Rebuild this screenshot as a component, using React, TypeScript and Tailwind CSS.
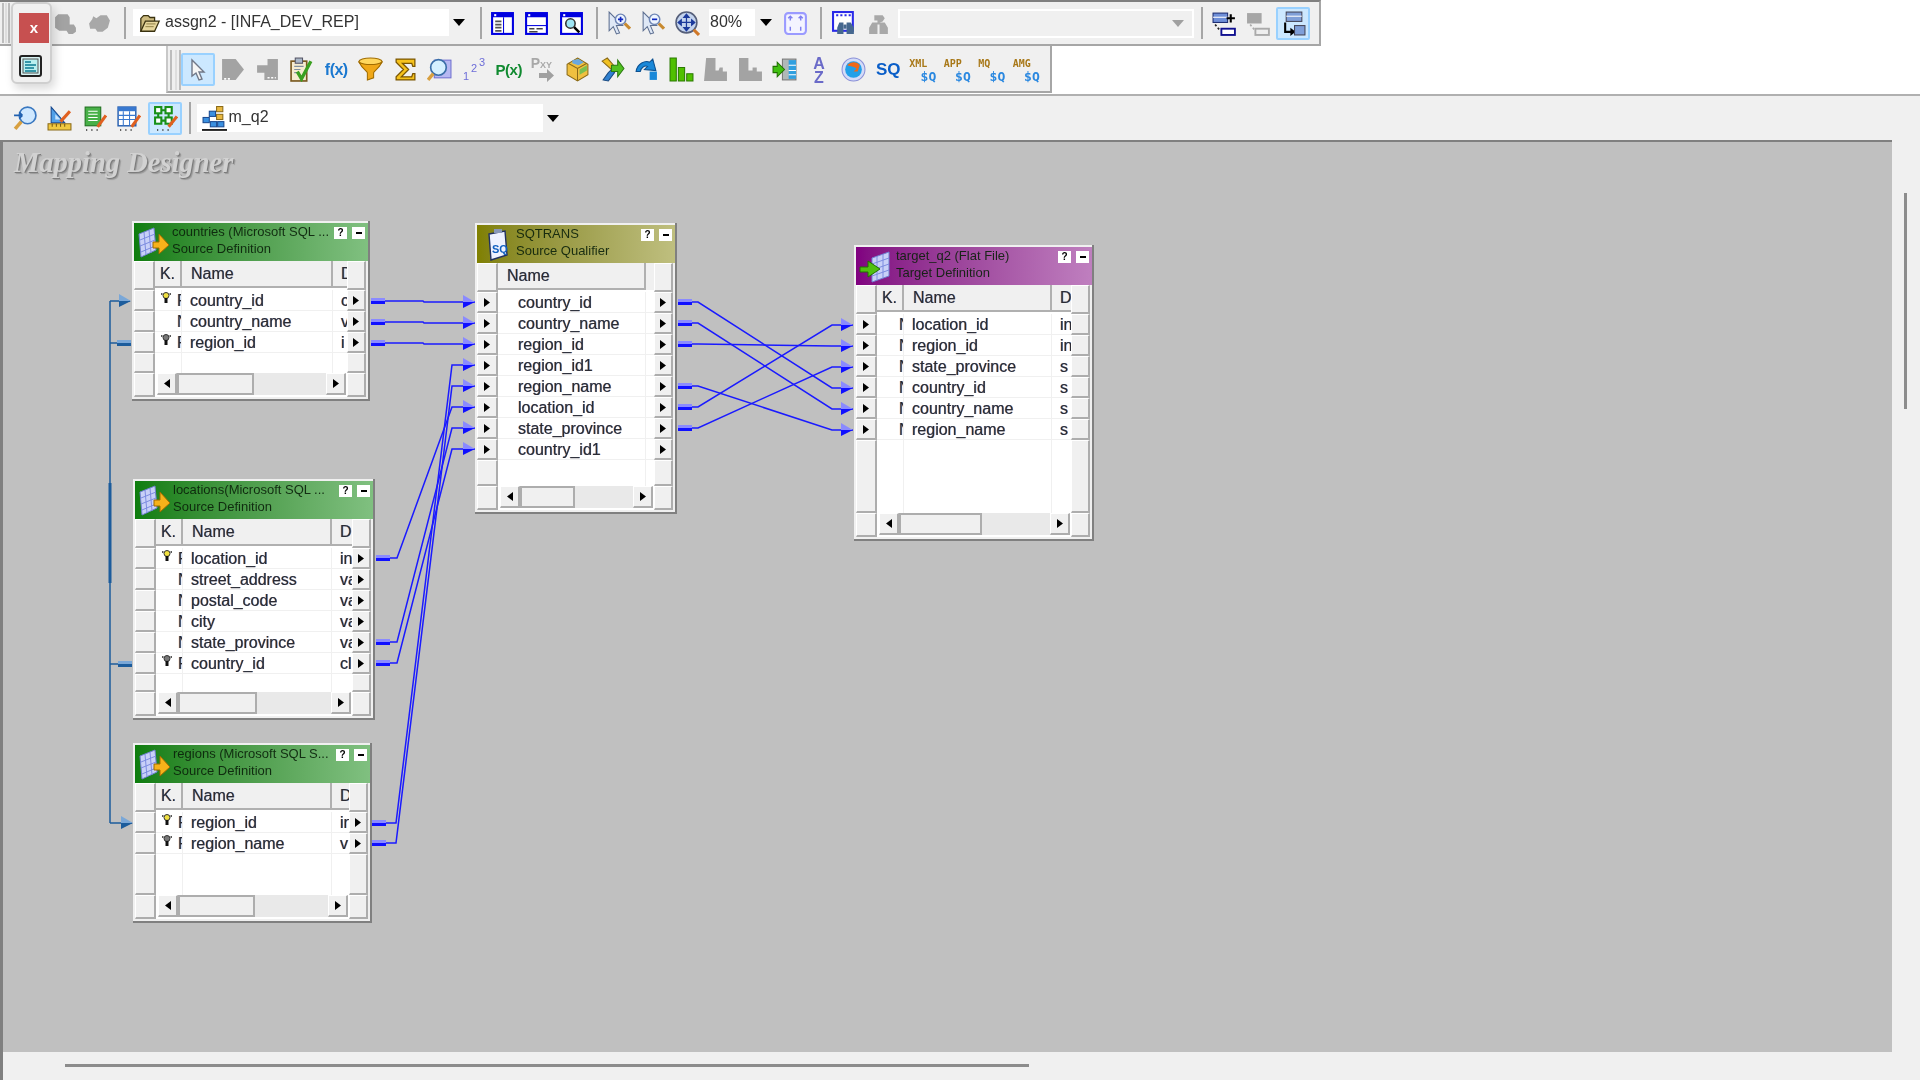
import React from "react";

const Ic = ({ children, s = 25 }: { children: React.ReactNode; s?: number }) => (
  <svg viewBox="0 0 24 24" width={s} height={s} className="block shrink-0">{children}</svg>
);
const Btn = ({ children, active }: { children?: React.ReactNode; active?: boolean }) => (
  <div className="w-[34.5px] h-full shrink-0 flex items-center justify-center">
    {active ? (
      <div className="w-[34px] h-[33px] flex items-center justify-center bg-[#cce8ff] border-2 border-[#99d1ff] rounded-[2px]">{children}</div>
    ) : children}
  </div>
);
const Sep = ({ cls }: { cls: string }) => <div className={`w-[2px] h-[32px] bg-[#a6a6a6] shrink-0 ${cls}`} />;
const Caret = ({ gray }: { gray?: boolean }) => (
  <svg width="12" height="7" viewBox="0 0 12 7"><path d="M0 0h12L6 7z" fill={gray ? "#a0a0a0" : "#000"} /></svg>
);
const Grip = ({ cls }: { cls: string }) => (
  <div className={`h-[40px] border-x-2 border-[#bdbdbd] shrink-0 ${cls}`}><div className="w-[2px] mx-auto h-full bg-[#dedede]" /></div>
);

const Blob1 = () => <Ic><path d="M2 6l3-3h9l2 3v7h4l2 3v4l-3 2h-4l-2-3H6l-4-3z" fill="#a3a3a3" /></Ic>;
const Blob2 = () => <Ic><path d="M6 5l3 2 4-3h6l3 5-2 7-5 4h-5l-2-3H3l-1-5 3-4z" fill="#a8a8a8" /></Ic>;
const Folder = () => <Ic s={22}><path d="M2 21V7l3-3h5l2 2h5v4" fill="#cdbb80" stroke="#3a3210" strokeWidth="1.4" /><path d="M2 21l5-11h15l-5 11z" fill="#e6d69c" stroke="#3a3210" strokeWidth="1.4" /><path d="M8 13h10M7 16h9" stroke="#8a7a40" /></Ic>;
const WinBase = ({ children }: { children?: React.ReactNode }) => (<><rect x="2" y="2" width="20" height="20" fill="#fff" stroke="#0000e0" strokeWidth="2" /><rect x="2" y="2" width="20" height="4" fill="#0000e0" /><rect x="4" y="3" width="2" height="2" fill="#fff" />{children}</>);
const Win1 = () => <Ic><WinBase><path d="M13 6v16" stroke="#0000e0" /><path d="M5 10h6M5 13h6M5 16h6M5 19h6" stroke="#555" strokeWidth="1.6" /></WinBase></Ic>;
const Win2 = () => <Ic><WinBase><path d="M2 14h20" stroke="#0000e0" /><path d="M5 17h5M12 17h6M5 20h8" stroke="#444" strokeWidth="1.5" /></WinBase></Ic>;
const Win3 = () => <Ic><WinBase><circle cx="11" cy="12" r="4.5" fill="#9fe6f5" stroke="#333" strokeWidth="1.5" /><path d="M14.5 15.5l5 5" stroke="#000" strokeWidth="2.4" /></WinBase></Ic>;
const Cursor = ({ c = "#9fb4d8" }: { c?: string }) => <path d="M3 1v18l4-4 3 7 3-1-3-7h6z" fill={c} stroke="#5c6e90" strokeWidth="1" />;
const ZoomPlus = ({ minus }: { minus?: boolean }) => <Ic><Cursor c="#dfe8f6" /><circle cx="14" cy="8" r="5" fill="#eef5ff" stroke="#6f86b5" strokeWidth="1.4" /><path d={minus ? "M11.5 8h5" : "M11.5 8h5M14 5.5v5"} stroke="#1028c0" strokeWidth="1.6" /><path d="M18 12l5 5" stroke="#c88a30" strokeWidth="3" /></Ic>;
const Pan = () => <Ic><circle cx="11" cy="11" r="10" fill="#c4d4ee" stroke="#555f7a" strokeWidth="1.5" /><path d="M11 3v16M3 11h16M11 3l-2.5 3h5zM11 19l-2.5-3h5zM3 11l3-2.5v5zM19 11l-3-2.5v5z" stroke="#1c3a9c" fill="#1c3a9c" strokeWidth="1.2" /><path d="M18 18l5 5" stroke="#d07828" strokeWidth="3" /></Ic>;
const Fit = () => <Ic><rect x="2" y="2" width="20" height="20" rx="3" fill="#f4f4ff" stroke="#9a9aff" strokeWidth="2" /><path d="M7 5v4M17 5v4M7 15v4M17 15v4M5 7l2-2 2 2M15 7l2-2 2 2" stroke="#8080f0" strokeWidth="1.4" fill="none" /></Ic>;
const Binoc = () => <Ic><rect x="1" y="1" width="19" height="18" fill="#fff" stroke="#2a2ae8" strokeWidth="2" /><path d="M4 4h2M8 4h2M12 4h2M16 4h2" stroke="#2a2ae8" strokeWidth="2" /><path d="M7 11h4v11H5v-6zM14 11h4l3 5v6h-7z" fill="#46688f" /><rect x="11" y="13" width="3" height="4" fill="#46688f" /></Ic>;
const BinocGray = () => <Ic><path d="M8 4h8l2 3-2 3-3 1v2h-2V9H8zM6 11h5v11H3v-6zM13 11h5l3 5v6h-8z" fill="#a8a8a8" /></Ic>;
const LinkAdd = () => <Ic><rect x="1" y="2" width="14" height="9" fill="#6f8fd8" stroke="#1c2c70" /><path d="M1 6h14" stroke="#fff" /><path d="M18 3v8M14 7h8" stroke="#000" strokeWidth="2" /><path d="M3 13l5 6" stroke="#222" strokeWidth="1.6" strokeDasharray="2 2" /><rect x="9" y="17" width="13" height="6" fill="#fff" stroke="#101090" strokeWidth="1.8" /></Ic>;
const LinkGray = () => <Ic><rect x="1" y="2" width="14" height="10" fill="#a6a6a6" /><path d="M4 13l5 6" stroke="#aaa" strokeWidth="1.6" strokeDasharray="2 2" /><rect x="9" y="17" width="13" height="6" fill="#eee" stroke="#aaa" strokeWidth="1.8" /></Ic>;
const LinkMove = () => <Ic><rect x="5" y="1" width="15" height="9" fill="#7f9fd8" stroke="#445" /><path d="M5 5h15" stroke="#fff" /><path d="M4 11v9h6" fill="none" stroke="#000" strokeWidth="2" /><path d="M9 16l5 4-5 4z" /><rect x="13" y="14" width="10" height="9" fill="#7f9fd8" stroke="#445" /></Ic>;

const ArrowSel = () => <svg width="18" height="24" viewBox="0 0 18 24"><path d="M3 2v16l4-3 3 7 3-1-3-7h5z" fill="#f5f5f5" stroke="#707888" strokeWidth="1.4" /></svg>;
const GraySrc = () => <Ic><path d="M2 2h13l8 10-8 10H2z" fill="#a3a3a3" /><path d="M4 21h7" stroke="#fff" strokeWidth="1.5" strokeDasharray="2 1.5" /></Ic>;
const GrayTgt = () => <Ic><path d="M12 2h10v20H9v-7H2V8h10z" fill="#a3a3a3" /><path d="M12 20h8" stroke="#fff" strokeWidth="1.5" strokeDasharray="2 1.5" /></Ic>;
const Clip = () => <Ic><rect x="2" y="4" width="15" height="19" fill="#f5ecd0" stroke="#7a5a20" strokeWidth="1.6" /><rect x="6" y="1" width="7" height="5" fill="#a9b6c6" stroke="#556" /><path d="M5 9h9M5 12h6M5 15h5" stroke="#8090a0" /><path d="M8 14l4 7 9-17" fill="none" stroke="#3aa020" strokeWidth="3.2" /></Ic>;
const Txt = ({ t, c, cls = "" }: { t: string; c: string; cls?: string }) => <span className={`font-['Liberation_Sans',sans-serif] font-bold text-center whitespace-nowrap leading-none ${cls}`} style={{ color: c }}>{t}</span>;
const Funnel = () => <Ic><ellipse cx="12" cy="4.5" rx="11" ry="3.5" fill="#ffd75e" stroke="#a06c00" /><path d="M1 5c3 6 7 8 8 10v7l6-2v-5c1-2 5-4 8-10-5 3-17 3-22 0z" fill="#f0a818" stroke="#a06c00" /></Ic>;
const Sigma = () => <Ic><path d="M3 2h18v7h-2l-1-3H9l6 6-7 7h10l1-3h2v6H3v-3l7-7-7-7z" fill="#f6c21c" stroke="#7a5500" strokeWidth="1.2" /></Ic>;
const Lookup = () => <Ic><rect x="7" y="3" width="16" height="17" fill="#b6b8f2" stroke="#7070d0" /><circle cx="11" cy="10" r="7.5" fill="#d4f0ff" stroke="#3a6ea8" strokeWidth="1.6" /><path d="M6 16l-5 6" stroke="#d8a040" strokeWidth="3.2" /></Ic>;
const Rank = () => <svg width="25" height="25" viewBox="0 0 25 25"><text x="1" y="23" fontSize="11" fill="#6d6dd8" fontFamily="Liberation Sans">1</text><text x="9" y="15" fontSize="11" fill="#6d6dd8" fontFamily="Liberation Sans">2</text><text x="17" y="9" fontSize="11" fill="#6d6dd8" fontFamily="Liberation Sans">3</text></svg>;
const Pxy = () => <div className="relative w-[25px] h-[27px]"><span className="absolute left-0 top-0 text-[14px] leading-none text-[#a8a8a8] font-bold font-['Liberation_Sans',sans-serif]">P<span className="text-[9px]">XY</span></span><svg className="absolute left-[8px] top-[13px]" width="16" height="13" viewBox="0 0 16 13"><path d="M0 4h8V0l7 6.500L8 13V9H0z" fill="#a0a0a0" /></svg></div>;
const Cube = () => <Ic><path d="M12 1l10 6v10l-10 6L2 17V7z" fill="#f0c040" stroke="#8a6a18" /><path d="M3 6l9 5 9-5" fill="none" stroke="#8a6a18" /><path d="M12 11v12" stroke="#8a6a18" /><path d="M7 3l6-1 5 3-5 3-6-2z" fill="#6aa8e0" /><path d="M14 12l7-4v5l-7 4z" fill="#7ac050" /></Ic>;
const Router = () => <Ic><path d="M2 4l5-3 7 8-3 3z" fill="#f0c020" stroke="#8a6a18" /><path d="M11 12l-3 3-5 7 5 1 6-8z" fill="#2f80d0" stroke="#1a4a80" /><path d="M11 8h6V3l6 8-6 8v-5h-6z" fill="#50c020" stroke="#2a7a10" /></Ic>;
const Update = () => <Ic><path d="M2 14C3 6 11 3 15 5l3-3 3 11-11-1 3-3c-3-1-6 1-7 5H2z" fill="#1a88d8" stroke="#0c5090" /><rect x="15" y="14" width="7" height="8" fill="#1a88d8" /></Ic>;
const Bars = () => <Ic><path d="M1 1h6v22H1zM9 10h6v13H9zM17 16h6v7h-6z" fill="#50c000" stroke="#2a7a00" /></Ic>;
const GrayBars = ({ flip }: { flip?: boolean }) => <Ic><path d={flip ? "M1 1h9v12h4v-3h4v4h5v9H1z" : "M3 1h9v12h3l1-3h3v4h4v9H1z"} fill="#a3a3a3" /></Ic>;
const Union = () => <Ic><rect x="10" y="2" width="13" height="20" fill="#b0b8b8" stroke="#777" /><path d="M16 3h7v18h-7" fill="#30a0e0" /><path d="M16 8h7M16 13h7M16 17h7" stroke="#fff" /><path d="M1 9h4V5l7 7-7 7v-4H1z" fill="#40c010" stroke="#207000" /></Ic>;
const AZ = () => <svg width="14" height="29" viewBox="0 0 14 29"><text x="7" y="14" textAnchor="middle" fontSize="16" fontWeight="700" fill="#6a6ac8" fontFamily="Liberation Sans">A</text><text x="7" y="28" textAnchor="middle" fontSize="16" fontWeight="700" fill="#6a6ac8" fontFamily="Liberation Sans">Z</text></svg>;
const Orb = () => <Ic><circle cx="12" cy="12" r="11" fill="#d4dcf8" stroke="#8a90d8" /><circle cx="12" cy="12" r="8" fill="#22a0e8" /><path d="M6 8c3-4 10-4 12 0l-2 6h-4l3-3c-3-2-6-2-9-3z" fill="#f06818" /></Ic>;
const Money = ({ t }: { t: string }) => (
  <div className="w-[27px] h-[28px] pt-[2px] flex flex-col font-['DejaVu_Sans_Mono','Liberation_Mono',monospace] text-[10px] leading-[12px] font-bold">
    <span className="text-[#a87818] text-left">{t}</span>
    <span className="text-[#2a88e0] text-[13px] leading-[13px] text-right">$Q</span>
  </div>
);

const FindArrow = () => <Ic><circle cx="14" cy="9" r="8" fill="#cfe8ff" stroke="#3a78c0" strokeWidth="1.6" /><path d="M1 9h8M9 9l-3-3M9 9l-3 3" stroke="#2060b0" strokeWidth="1.6" fill="none" /><path d="M8 15l-6 7" stroke="#d8a040" strokeWidth="3.4" /></Ic>;
const Ruler = () => <Ic><path d="M4 1v15h13z" fill="#50a0e8" stroke="#184a90" /><path d="M8 8v5h5z" fill="#c8e4ff" /><path d="M1 17h22v6H1z" fill="#f0c840" stroke="#8a6a18" /><path d="M5 17v3M9 17v3M13 17v3M17 17v3" stroke="#7a5a10" /><path d="M22 5l-9 10" stroke="#e06020" strokeWidth="3" /></Ic>;
const DocPen = () => <Ic><rect x="3" y="1" width="15" height="18" fill="#48b048" stroke="#1e6e1e" /><path d="M6 5h9M6 8h9M6 11h9M6 14h9" stroke="#fff" /><path d="M23 9l-8 11" stroke="#e06020" strokeWidth="3" /><path d="M4 23h1M9 23h1M14 23h1" stroke="#444" strokeWidth="2" /></Ic>;
const GridPen = () => <Ic><rect x="2" y="1" width="17" height="18" fill="#fff" stroke="#2860b0" strokeWidth="1.4" /><rect x="2" y="1" width="17" height="4" fill="#3878d0" /><path d="M2 9h17M2 13h17M7 5v14M13 5v14" stroke="#3878d0" /><path d="M23 9l-8 11" stroke="#e06020" strokeWidth="3" /><path d="M4 23h1M9 23h1M14 23h1" stroke="#444" strokeWidth="2" /></Ic>;
const GreenNodes = () => <Ic><g fill="#fff" stroke="#189018" strokeWidth="2"><rect x="2" y="1" width="6" height="6" /><rect x="12" y="1" width="6" height="6" /><rect x="2" y="11" width="6" height="6" /><rect x="12" y="11" width="6" height="6" /></g><path d="M5 7v4M15 7v4M8 4h4M8 14h4" stroke="#189018" strokeWidth="2" /><path d="M23 10l-8 10" stroke="#e06020" strokeWidth="3" /><path d="M4 23h1M9 23h1M14 23h1" stroke="#444" strokeWidth="2" /></Ic>;
const Mapping = () => <Ic><g fill="#e8b840" stroke="#8a6a18"><rect x="14" y="0.500" width="6" height="5" /><rect x="14" y="8" width="6" height="5" /></g><g fill="#3a90e0" stroke="#1a4a90"><rect x="7" y="5" width="6" height="5" /><rect x="1" y="11" width="6" height="5" /><rect x="8" y="15" width="6" height="5" /><rect x="15" y="15" width="6" height="5" /></g><path d="M0 23h24" stroke="#000" strokeWidth="1.6" /></Ic>;
const PopIcon = () => <svg width="23" height="22" viewBox="0 0 23 22"><rect x="1" y="1" width="21" height="20" rx="2" fill="#d8f4f4" stroke="#222" strokeWidth="2" /><rect x="4" y="4" width="15" height="14" fill="#b8f0f0" stroke="#555" /><path d="M6 7h6M6 10h11M6 13h9M6 16h11" stroke="#0a7a90" strokeWidth="1.5" /></svg>;

const SrcIcon = () => <svg width="32" height="33" viewBox="0 0 32 33" className="block"><path d="M2 8l15-6 2 22-15 7z" fill="#c8d0f8" stroke="#7080d0" /><path d="M7 6l2 23M12 4l2 23M3 14l15-6M3 20l15-6M4 26l14-6" stroke="#7c8ce0" /><path d="M16 16h6v-8l10 11-10 9v-6h-6z" fill="#f6b21a" stroke="#a06a00" /></svg>;
const TgtIcon = () => <svg width="32" height="33" viewBox="0 0 32 33" className="block"><path d="M13 8l17-6v24l-17 6z" fill="#c8d0f8" stroke="#7080d0" /><path d="M18 6v24M24 4v24M13 14l17-6M13 20l17-6M13 26l17-6" stroke="#7c8ce0" /><path d="M1 17h8v-6l12 8-12 8v-5H1z" fill="#50c010" stroke="#207000" /></svg>;
const SqIcon = () => <svg width="22" height="33" viewBox="0 0 22 33" className="block"><path d="M2 6l16-3 2 24-16 5z" fill="#eef2ff" stroke="#203060" strokeWidth="1.4" /><rect x="7" y="1" width="8" height="4" fill="#8898b8" /><text x="5" y="25" fontSize="11" fontWeight="700" fill="#1060c0" fontFamily="Liberation Sans">SQ</text></svg>;

const Key = ({ dark }: { dark?: boolean }) => <svg width="10" height="12" viewBox="0 0 10 12" className="absolute left-[6px] top-[2px]"><path d="M0 2h1.500M8.500 2H10" stroke="#222" strokeWidth="1.5" /><circle cx="5" cy="3.500" r="3" fill={dark ? "#777" : "#f0e040"} stroke="#333" /><rect x="3.500" y="6" width="3" height="5" fill="#111" /></svg>;
const Tri = () => <svg width="6" height="9" viewBox="0 0 6 9"><path d="M0 0l6 4.500L0 9z" fill="#000" /></svg>;
const TriL = () => <svg width="6" height="9" viewBox="0 0 6 9"><path d="M6 0L0 4.500 6 9z" fill="#000" /></svg>;

const cell = "border-l border-t border-l-white border-t-white border-r-2 border-b-2 border-r-[#adadad] border-b-[#adadad] bg-[#f0f0f0]";

type Row = { n: string; k?: string; key?: "y" | "d"; t?: string };
type NodeP = {
  cls: string; title: string; sub: string; grad: string; icon: React.ReactNode; iconW: string;
  rows: Row[]; thumb: string; kw?: string; nw: string; lp?: boolean; rp?: boolean;
};

const GNode = ({ cls, title, sub, grad, icon, iconW, rows, thumb, kw, nw, lp, rp }: NodeP) => (
  <div className={`absolute flex flex-col bg-[#f0f0f0] pl-[2px] pt-[2px] pb-[2px] border-r-2 border-b-2 border-r-[#808080] border-b-[#808080] ${cls}`}>
    <div className={`h-[38px] shrink-0 flex bg-linear-to-r ${grad}`}>
      <div className={`shrink-0 pl-[3px] pt-[3px] ${iconW}`}>{icon}</div>
      <div className="flex-1 min-w-0 overflow-hidden whitespace-nowrap text-[13px] leading-[17px] text-[#0a200a]/90 font-['Liberation_Sans',sans-serif]">
        <div>{title}</div><div>{sub}</div>
      </div>
      <div className="flex gap-[5px] pt-[4px] pr-[3px] shrink-0">
        <div className="w-[13px] h-[12px] bg-white text-[10px] font-bold leading-[12px] text-center text-black font-['Liberation_Sans',sans-serif]">?</div>
        <div className="w-[13px] h-[12px] bg-white flex items-center justify-center"><div className="w-[6px] h-[2px] bg-black" /></div>
      </div>
    </div>
    <div className="flex-1 flex pr-[2px] min-h-0">
      <div className="w-[21px] shrink-0 flex flex-col">
        <div className={`h-[29px] shrink-0 ${cell}`} />
        {rows.map((r) => <div key={r.n} className={`h-[21px] shrink-0 flex items-center justify-center ${cell}`}>{lp && <Tri />}</div>)}
        <div className={`flex-1 ${cell}`} />
        <div className={`h-[24px] shrink-0 ${cell}`} />
      </div>
      <div className="flex-1 min-w-0 flex flex-col bg-white font-['Liberation_Sans',sans-serif] text-[16px] text-[#2b2b33] [text-shadow:0.4px_0_0_#7aa8e8,-0.4px_0_0_#e8a878]">
        <div className="h-[29px] shrink-0 flex bg-white pb-[2px]">
          {kw && <div className={`shrink-0 bg-[#f0f0f0] border-r-2 border-b-2 border-[#b0b0b0] text-center leading-[26px] overflow-hidden ${kw}`}>K.</div>}
          <div className={`shrink-0 bg-[#f0f0f0] border-r-2 border-b-2 border-[#b0b0b0] leading-[26px] pl-[9px] ${nw}`}>Name</div>
          {kw ? <div className="flex-1 min-w-0 overflow-hidden bg-[#f0f0f0] border-b-2 border-[#b0b0b0] pl-[8px] leading-[26px]">D</div> : <div className="flex-1 bg-[#f0f0f0]" />}
        </div>
        {rows.map((r) => (
          <div key={r.n} className="h-[21px] shrink-0 flex border-b border-[#f0f0f0] leading-[21px] overflow-hidden">
            {kw && <div className={`shrink-0 relative overflow-hidden pl-[22px] border-r border-[#f0f0f0] ${kw}`}>{r.key && <Key dark={r.key === "d"} />}{r.k}</div>}
            <div className={`shrink-0 whitespace-nowrap border-r border-[#f0f0f0] ${kw ? "pl-[8px]" : "pl-[20px]"} ${nw}`}>{r.n}</div>
            {kw && <div className="flex-1 min-w-0 overflow-hidden pl-[8px]">{r.t}</div>}
          </div>
        ))}
        <div className="flex-1 flex">
          {kw && <div className={`shrink-0 border-r border-[#f0f0f0] ${kw}`} />}
          <div className={`shrink-0 border-r border-[#f0f0f0] ${nw}`} />
        </div>
        <div className="h-[24px] shrink-0 flex pl-[2px] pr-[1px] pb-[2px] bg-white">
          <div className={`w-[20px] flex items-center justify-center ${cell}`}><TriL /></div>
          <div className={`bg-[#f0f0f0] border-2 border-[#adadad] ${thumb}`} />
          <div className="flex-1 bg-[#e9e9e9]" />
          <div className={`w-[20px] flex items-center justify-center ${cell}`}><Tri /></div>
        </div>
      </div>
      <div className="w-[19px] shrink-0 flex flex-col">
        <div className={`h-[29px] shrink-0 ${cell}`} />
        {rows.map((r) => <div key={r.n} className={`h-[21px] shrink-0 flex items-center justify-center ${cell}`}>{rp && <Tri />}</div>)}
        <div className={`flex-1 ${cell}`} />
        <div className={`h-[24px] shrink-0 ${cell}`} />
      </div>
    </div>
  </div>
);

const Head = ({ x, y, pale, dark }: { x: number; y: number; pale: string; dark: string }) => (
  <g>
    <path d={`M${x - 12} ${y - 7}L${x} ${y}H${x - 12}z`} fill={pale} />
    <path d={`M${x - 12} ${y}H${x}L${x - 12} ${y + 6}z`} fill={dark} />
  </g>
);
const blueLinks: [number, number, number, number, number, number][] = [
  [371, 301, 423, 424, 475, 302], [371, 322, 423, 424, 475, 323], [371, 343, 423, 424, 475, 344],
  [372, 823, 396, 452, 475, 365], [372, 843, 396, 452, 475, 386],
  [376, 558, 397, 452, 475, 407], [376, 642, 397, 452, 475, 428], [376, 663, 397, 452, 475, 449],
  [678, 302, 698, 832, 853, 388], [678, 323, 698, 832, 853, 409], [678, 344, 698, 832, 853, 346],
  [678, 386, 698, 832, 853, 430], [678, 407, 698, 832, 853, 325], [678, 428, 698, 832, 853, 367],
];
const Links = () => (
  <svg className="absolute inset-0" width="1892" height="912" viewBox="0 140 1892 912">
    {blueLinks.map(([x0, y0, b0, b1, x1, y1]) => (
      <g key={`${x0}-${y0}`}>
        <rect x={x0} y={y0 - 3} width="14" height="3" fill="#8a8aff" />
        <rect x={x0} y={y0} width="14" height="3" fill="#1010ff" />
        <path d={`M${x0 + 14} ${y0}H${b0}L${b1} ${y1}H${x1}`} fill="none" stroke="#1a1aff" strokeWidth="1.5" />
        <Head x={x1} y={y1} pale="#8a8aff" dark="#1010ff" />
      </g>
    ))}
    <path d="M110 301V823" stroke="#1c5c9c" strokeWidth="1.5" fill="none" />
    <path d="M110 483V583" stroke="#1c5c9c" strokeWidth="3" fill="none" />
    <path d="M110 301H130M110 823H132M110 664H118M110 343H118" stroke="#1c5c9c" strokeWidth="1.5" fill="none" />
    <rect x="117" y="340" width="14" height="3" fill="#7aa7d7" /><rect x="117" y="343" width="14" height="3" fill="#1c5c9c" />
    <rect x="118" y="661" width="14" height="3" fill="#7aa7d7" /><rect x="118" y="664" width="14" height="3" fill="#1c5c9c" />
    <Head x={131} y={301} pale="#7aa7d7" dark="#1c5c9c" />
    <Head x={133} y={823} pale="#7aa7d7" dark="#1c5c9c" />
  </svg>
);

const srcCountries: Row[] = [
  { n: "country_id", k: "F", key: "y", t: "c" }, { n: "country_name", k: "N", t: "v" }, { n: "region_id", k: "F", key: "d", t: "i" },
];
const srcLocations: Row[] = [
  { n: "location_id", k: "F", key: "y", t: "in" }, { n: "street_address", k: "N", t: "va" }, { n: "postal_code", k: "N", t: "va" },
  { n: "city", k: "N", t: "va" }, { n: "state_province", k: "N", t: "va" }, { n: "country_id", k: "F", key: "d", t: "cl" },
];
const srcRegions: Row[] = [{ n: "region_id", k: "F", key: "y", t: "in" }, { n: "region_name", k: "F", key: "d", t: "v" }];
const sq: Row[] = ["country_id", "country_name", "region_id", "region_id1", "region_name", "location_id", "state_province", "country_id1"].map((n) => ({ n }));
const tgt: Row[] = [
  { n: "location_id", t: "in" }, { n: "region_id", t: "in" }, { n: "state_province", t: "s" },
  { n: "country_id", t: "s" }, { n: "country_name", t: "s" }, { n: "region_name", t: "s" },
].map((r) => ({ ...r, k: "N" }));

const green = "from-[#0d7d0d] to-[#80c080]";

export default function App() {
  return (
    <div className="relative w-[1920px] h-[1080px] overflow-hidden flex flex-col bg-white blur-[0.5px] font-['Liberation_Sans',sans-serif]">
      <div className="absolute left-[11px] top-[2px] w-[41px] h-[82px] z-10 bg-[#f0f0f0] border-2 border-[#cfcfcf] rounded-md shadow-[3px_5px_10px_rgba(0,0,0,0.15)] flex flex-col items-center pt-[9px] pl-[6px] pr-[1px]">
        <div className="w-[30px] h-[30px] bg-[#c75050] text-white font-bold text-[15px] leading-[30px] text-center">x</div>
        <div className="mt-[12px] self-start"><PopIcon /></div>
      </div>

      <div className="h-[46px] w-[1321px] shrink-0 flex items-center pl-[2px] bg-[#f0f0f0] border-t-2 border-t-[#808080] border-r-2 border-r-[#a6a6a6] border-b-2 border-b-[#a6a6a6] text-[16px] text-[#333]">
        <Grip cls="w-[8px]" />
        <div className="ml-[38px] h-full flex"><Btn><Blob1 /></Btn><Btn><Blob2 /></Btn></div>
        <Sep cls="ml-[7px]" />
        <div className="ml-[7px] w-[336px] h-[27px] -mt-[1px] bg-white flex items-center pl-[6px]">
          <Folder /><span className="ml-[4px] flex-1 whitespace-nowrap -mt-[2px]">assgn2 - [INFA_DEV_REP]</span>
          <div className="w-[20px] h-full bg-[#f0f0f0] flex items-center justify-center"><Caret /></div>
        </div>
        <Sep cls="ml-[11px]" />
        <div className="ml-[3px] h-full flex"><Btn><Win1 /></Btn><Btn><Win2 /></Btn><Btn><Win3 /></Btn></div>
        <Sep cls="ml-[7px]" />
        <div className="ml-[3.5px] h-full flex"><Btn><ZoomPlus /></Btn><Btn><ZoomPlus minus /></Btn><Btn><Pan /></Btn></div>
        <div className="ml-[4.5px] w-[67px] h-[27px] -mt-[1px] bg-white flex items-center pl-[1px]">
          <span className="flex-1 -mt-[2px]">80%</span>
          <div className="w-[21px] h-full bg-[#f0f0f0] flex items-center justify-center"><Caret /></div>
        </div>
        <div className="ml-[2.7px] h-full flex"><Btn><Fit /></Btn></div>
        <Sep cls="ml-[7px]" />
        <div className="ml-[5px] h-full flex"><Btn><Binoc /></Btn><Btn><BinocGray /></Btn></div>
        <div className="ml-[2px] w-[296px] h-[29px] border-2 border-white flex items-center justify-end pr-[8px]"><Caret gray /></div>
        <Sep cls="ml-[7px]" />
        <div className="ml-[4px] h-full flex"><Btn><LinkAdd /></Btn><Btn><LinkGray /></Btn><Btn active><LinkMove /></Btn></div>
      </div>

      <div className="h-[48px] shrink-0 flex bg-white">
        <div className="ml-[166px] w-[886px] h-[47px] flex items-center bg-[#f0f0f0] pl-[2px] pt-[2px] border-r-2 border-b-2 border-[#a6a6a6] border-l-2 border-l-[#c8c8c8]">
          <Grip cls="w-[11px]" />
          <div className="h-full flex">
            <Btn active><ArrowSel /></Btn><Btn><GraySrc /></Btn><Btn><GrayTgt /></Btn><Btn><Clip /></Btn>
            <Btn><Txt t="f(x)" c="#1a78d0" cls="text-[16px] tracking-[-0.5px]" /></Btn><Btn><Funnel /></Btn><Btn><Sigma /></Btn><Btn><Lookup /></Btn>
            <Btn><Rank /></Btn><Btn><Txt t="P(x)" c="#108a30" cls="text-[15px] tracking-[-0.5px]" /></Btn><Btn><Pxy /></Btn><Btn><Cube /></Btn>
            <Btn><Router /></Btn><Btn><Update /></Btn><Btn><Bars /></Btn><Btn><GrayBars /></Btn><Btn><GrayBars flip /></Btn>
            <Btn><Union /></Btn><Btn><AZ /></Btn><Btn><Orb /></Btn><Btn><Txt t="SQ" c="#0a5ec8" cls="text-[17px]" /></Btn>
            <Btn><Money t="XML" /></Btn><Btn><Money t="APP" /></Btn><Btn><Money t="MQ" /></Btn><Btn><Money t="AMG" /></Btn>
          </div>
        </div>
      </div>

      <div className="h-[46px] shrink-0 flex items-center bg-[#f0f0f0] pl-[8px] border-t-2 border-[#b0b0b0] text-[16px] text-[#333]">
        <div className="h-full flex"><Btn><FindArrow /></Btn><Btn><Ruler /></Btn><Btn><DocPen /></Btn><Btn><GridPen /></Btn></div>
        <div className="ml-[2px] h-full flex"><Btn active><GreenNodes /></Btn></div>
        <Sep cls="ml-[6px]" />
        <div className="ml-[6px] w-[367px] h-[28px] bg-white flex items-center pl-[5px]">
          <Mapping /><span className="ml-[2px] flex-1 -mt-[2px]">m_q2</span>
          <div className="w-[21px] h-full bg-[#f0f0f0] flex items-center justify-center"><Caret /></div>
        </div>
      </div>

      <div className="flex-1 min-h-0 flex">
        <div className="relative flex-1 bg-[#c0c0c0] overflow-hidden shadow-[inset_3px_2px_0_#808080]">
          <div className="absolute left-[14px] top-[8px] text-[28.5px] leading-[30px] italic font-bold font-['Liberation_Serif',serif] text-[#d2d2d2] [text-shadow:1px_1px_0_#7c7c7c,2px_2px_1px_#9a9a9a]">Mapping Designer</div>
          <Links />
          <GNode cls="left-[132px] top-[81px] w-[238px] h-[180px]" title="countries (Microsoft SQL ..." sub="Source Definition" grad={green} icon={<SrcIcon />} iconW="w-[38px]" rows={srcCountries} thumb="w-[77px]" kw="w-[27px]" nw="w-[151px]" rp />
          <GNode cls="left-[133px] top-[339px] w-[242px] h-[241px]" title="locations(Microsoft SQL ..." sub="Source Definition" grad={green} icon={<SrcIcon />} iconW="w-[38px]" rows={srcLocations} thumb="w-[79px]" kw="w-[27px]" nw="w-[149px]" rp />
          <GNode cls="left-[133px] top-[603px] w-[239px] h-[180px]" title="regions (Microsoft SQL S..." sub="Source Definition" grad={green} icon={<SrcIcon />} iconW="w-[38px]" rows={srcRegions} thumb="w-[77px]" kw="w-[27px]" nw="w-[149px]" rp />
          <GNode cls="left-[475px] top-[83px] w-[202px] h-[291px]" title="SQTRANS" sub="Source Qualifier" grad="from-[#808000] to-[#bfbf7f]" icon={<SqIcon />} iconW="w-[39px] pl-[10px]" rows={sq} thumb="w-[55px]" nw="w-[148px]" lp rp />
          <GNode cls="left-[854px] top-[105px] w-[240px] h-[296px]" title="target_q2 (Flat File)" sub="Target Definition" grad="from-[#800080] to-[#bf7fbf]" icon={<TgtIcon />} iconW="w-[40px]" rows={tgt} thumb="w-[83px]" kw="w-[27px]" nw="w-[148px]" lp />
        </div>
        <div className="w-[28px] shrink-0 bg-[#f0f0f0] pt-[53px] pl-[12px]">
          <div className="w-[3px] h-[216px] bg-[#8c8c8c]" />
        </div>
      </div>
      <div className="h-[28px] shrink-0 bg-[#f0f0f0] pl-[62px] pt-[12px] border-l-[3px] border-l-[#808080]">
        <div className="w-[964px] h-[3px] bg-[#8c8c8c]" />
      </div>
    </div>
  );
}
